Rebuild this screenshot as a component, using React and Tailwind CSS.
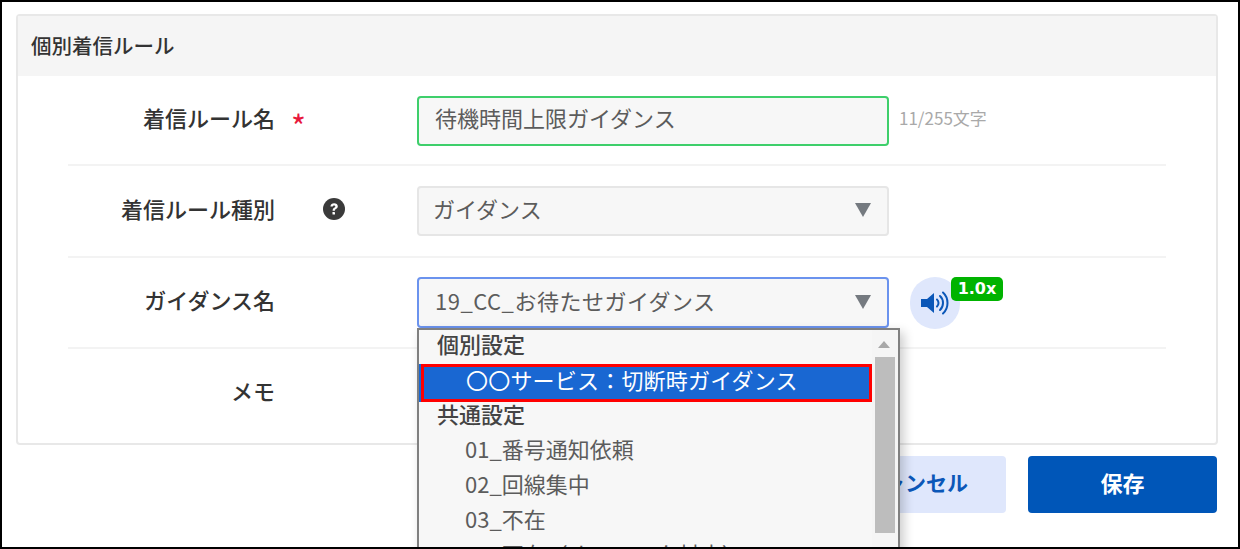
import React from 'react';

const FONT = '"Noto Sans CJK JP", "Noto Sans", sans-serif';

const groups = [
  { type: 'group', text: '個別設定', cls: 'pb-[9px]' },
  { type: 'selected', text: '〇〇サービス：切断時ガイダンス' },
  { type: 'group', text: '共通設定', cls: 'pb-[10px]' },
  { type: 'item', text: '01_番号通知依頼' },
  { type: 'item', text: '02_回線集中' },
  { type: 'item', text: '03_不在' },
  { type: 'item', text: '04_不在（オペレータ対応）' },
];

const Caret = () => (
  <svg width="18" height="16" viewBox="0 0 18 16" className="shrink-0 mb-[2px]">
    <path d="M1 1h16L9 15z" fill="#757a80" />
  </svg>
);

const HelpIcon = () => (
  <svg width="22" height="22" viewBox="0 0 22 22">
    <circle cx="11" cy="11" r="11" fill="#3a3a3a" />
    <path d="M7.4 8.4c.2-2.1 1.8-3.2 3.7-3.2 2.1 0 3.7 1.2 3.7 3.1 0 1.5-.9 2.2-1.8 2.8-.8.5-1.1.9-1.1 1.7H9.6c0-1.6.5-2.3 1.5-3 .7-.5 1.2-.8 1.2-1.4 0-.6-.5-1-1.2-1-.8 0-1.3.5-1.4 1.2z" fill="#fff" />
    <rect x="9.5" y="14" width="2.5" height="2.6" rx=".4" fill="#fff" />
  </svg>
);

const SpeakerIcon = () => (
  <svg width="31" height="26" viewBox="0 0 31 26">
    <path d="M1 9h6l7-6v20l-7-6H1z" fill="#0b57b8" />
    <path d="M17 9.5c2 1.8 2 5.200 0 7" fill="none" stroke="#0b57b8" strokeWidth="2" strokeLinecap="round" />
    <path d="M20 6c4 3.600 4 10.400 0 14" fill="none" stroke="#0b57b8" strokeWidth="2" strokeLinecap="round" />
    <path d="M23 2.500c6 5.500 6 15.500 0 21" fill="none" stroke="#0b57b8" strokeWidth="2" strokeLinecap="round" />
  </svg>
);

const Row = ({ label, mark, rowCls, children }) => (
  <div className={`flex items-center mx-[50px] ${rowCls}`}>
    <div className="w-[207px] pb-[6px] text-right text-[22px] font-medium text-[#333] whitespace-nowrap">{label}</div>
    <div className="w-[142px] pl-[16px] flex items-center">{mark}</div>
    {children}
  </div>
);

const Dropdown = () => (
  <div className="absolute left-0 top-[51px] w-[483px] h-[240px] bg-[#f7f7f7] border-2 border-[#808080] shadow-[4px_4px_10px_rgba(0,0,0,0.2)] flex z-10">
    <div className="flex-1 min-w-0">
      {groups.map((row) => {
        if (row.type === 'group') {
          return <div key={row.text} className={`h-[35px] pl-[18px] flex items-center text-[22px] font-medium text-[#444] ${row.cls}`}>{row.text}</div>;
        }
        if (row.type === 'selected') {
          return (
            <div key={row.text} className="-my-[1px] pl-[2px] bg-[#1967d2]">
              <div className="h-[38px] pl-[42px] pb-[7px] flex items-center bg-[#1967d2] border-[3px] border-[#ff0000] text-[22px] tracking-[0.2px] text-white whitespace-nowrap">
                {row.text}
              </div>
            </div>
          );
        }
        return <div key={row.text} className="h-[35px] pl-[46px] pb-[10px] flex items-center text-[22px] text-[#5c5c5c] whitespace-nowrap">{row.text}</div>;
      })}
    </div>
    <div className="w-[26px] shrink-0 bg-[#f5f5f5] flex flex-col items-center pt-[11px] pr-[2px]">
      <div className="w-0 h-0 border-l-[6px] border-r-[6px] border-b-[7px] border-l-transparent border-r-transparent border-b-[#a8a8a8]" />
      <div className="w-[20px] h-[176px] mt-[9px] ml-[2px] bg-[#bdbdbd]" />
    </div>
  </div>
);

export default function App() {
  return (
    <div className="w-[1240px] h-[549px] bg-white overflow-hidden border-2 border-black pt-[12px] pl-[14px] pr-[20px]" style={{ fontFamily: FONT }}>
      <div className="border-2 border-[#e8e8e8] rounded-[4px] h-[431px]">
        <div className="h-[60px] bg-[#f5f5f5] pl-[13px] pb-[2px] flex items-center text-[20.500px] font-medium text-[#333]">個別着信ルール</div>

        <Row
          label="着信ルール名"
          rowCls="h-[90px] border-b-2 border-[#f3f3f3]"
          mark={<span className="text-[#e8173c] text-[32px] leading-none mt-[10px]">*</span>}
        >
          <div className="w-[472px] h-[50px] mt-[2px] bg-[#f7f7f7] border-2 border-[#3ecf6b] rounded-[4px] pl-[16px] flex items-center text-[22px] text-[#5c5c5c]">
            <span className="pb-[8px]">待機時間上限ガイダンス</span>
          </div>
          <span className="ml-[10px] pb-[4px] text-[17px] text-[#a9a9a9] whitespace-nowrap">11/255文字</span>
        </Row>

        <Row
          label="着信ルール種別"
          rowCls="h-[92px] border-b-2 border-[#f3f3f3]"
          mark={<span className="ml-[32px] mb-[4px] flex"><HelpIcon /></span>}
        >
          <div className="w-[472px] h-[50px] bg-[#f7f7f7] border-2 border-[#e6e6e6] rounded-[4px] pl-[14px] pr-[15px] flex items-center justify-between text-[22px] text-[#5c5c5c]">
            <span className="pb-[6px]">ガイダンス</span>
            <Caret />
          </div>
        </Row>

        <Row label="ガイダンス名" rowCls="h-[91px] border-b-2 border-[#f3f3f3]">
          <div className="relative w-[472px]">
            <div className="h-[51px] bg-[#f7f7f7] border-2 border-[#6b93ee] rounded-[4px] pl-[16px] pr-[15px] flex items-center justify-between text-[22px] text-[#5c5c5c]">
              <span className="pb-[5px] tracking-[0.5px]">19_CC_お待たせガイダンス</span>
              <Caret />
            </div>
            <Dropdown />
          </div>
          <div className="relative ml-[21px] w-[50px] h-[52px] rounded-full bg-[#dfe7fc] flex items-center justify-center">
            <SpeakerIcon />
            <span className="absolute left-[41px] top-0 w-[52px] h-[24px] rounded-[5px] bg-[#00b300] text-white text-[16px] font-bold flex items-center justify-center" style={{ fontFamily: '"DejaVu Sans", sans-serif' }}>1.0x</span>
          </div>
        </Row>

        <Row label="メモ" rowCls="h-[96px] pb-[8px]" />
      </div>

      <div className="flex justify-end gap-[22px] mt-[11px] pr-[1px]">
        <div className="w-[220px] h-[57px] pb-[4px] rounded-[4px] bg-[#dfe7fc] text-[#0b57b8] text-[21px] font-bold flex items-center justify-end pr-[38px]">キャンセル</div>
        <div className="w-[189px] h-[57px] pb-[4px] rounded-[4px] bg-[#0056b8] text-white text-[22px] font-bold flex items-center justify-center">保存</div>
      </div>
    </div>
  );
}
